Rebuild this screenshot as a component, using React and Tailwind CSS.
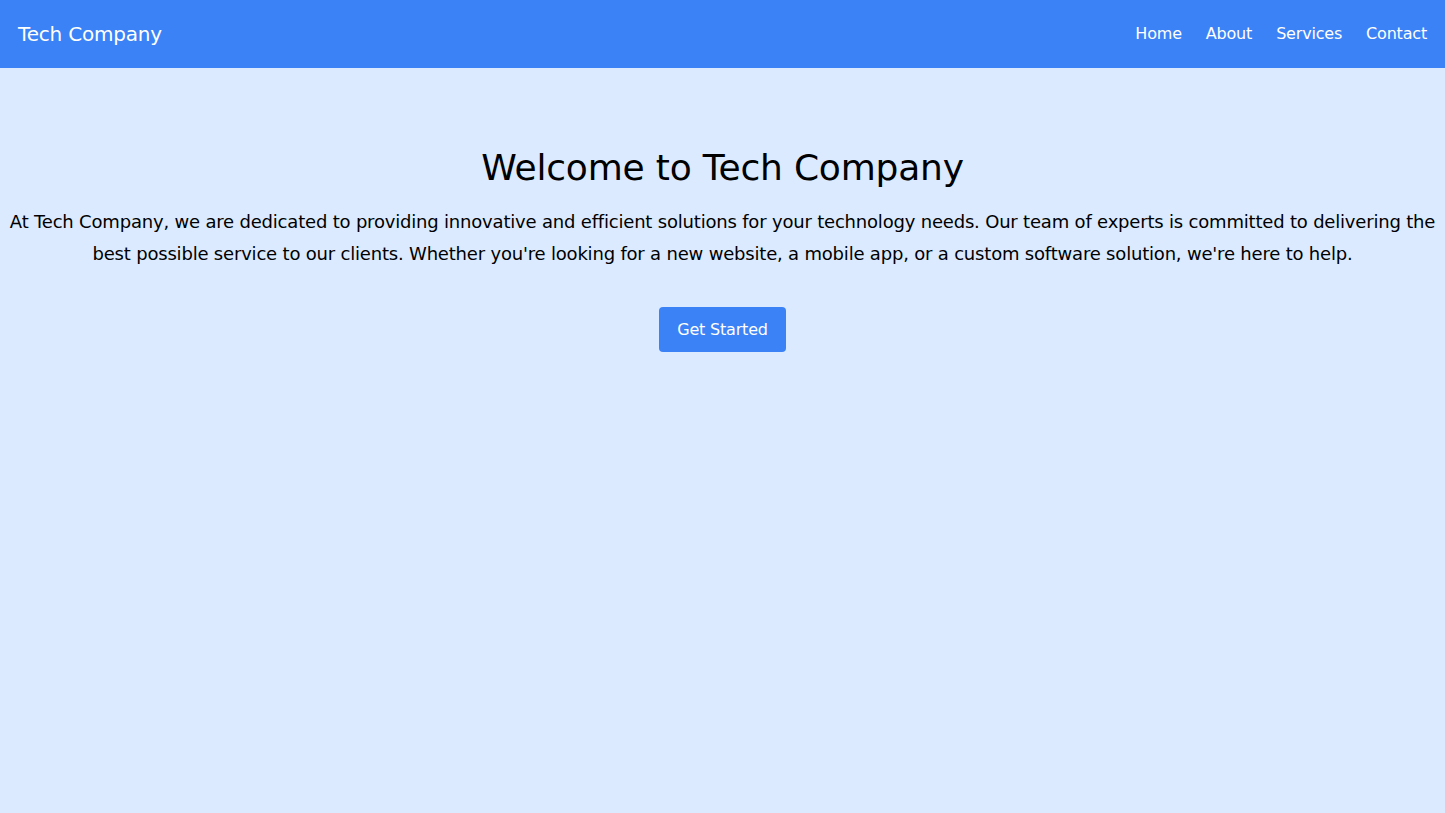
export default function App() {
  return (
    <div className="min-h-screen bg-[#dbeafe] font-['DejaVu_Sans',sans-serif] tracking-[-0.012em]">
      <nav className="flex h-[68px] items-center justify-between bg-[#3b82f6] px-[18px] text-white">
        <a href="#" className="text-xl">
          Tech Company
        </a>
        <ul className="flex gap-6 text-base">
          <li>
            <a href="#">Home</a>
          </li>
          <li>
            <a href="#">About</a>
          </li>
          <li>
            <a href="#">Services</a>
          </li>
          <li>
            <a href="#">Contact</a>
          </li>
        </ul>
      </nav>

      <section className="px-2 pt-20 text-center">
        <h1 className="mb-[18px] text-4xl">Welcome to Tech Company</h1>
        <p className="text-lg leading-8">
          At Tech Company, we are dedicated to providing innovative and efficient
          solutions for your technology needs. Our team of experts is committed to
          delivering the best possible service to our clients. Whether you're looking
          for a new website, a mobile app, or a custom software solution, we're here
          to help.
        </p>
        <button className="mt-[37px] h-[45px] rounded bg-[#3b82f6] px-[18px] text-white">
          Get Started
        </button>
      </section>
    </div>
  );
}
